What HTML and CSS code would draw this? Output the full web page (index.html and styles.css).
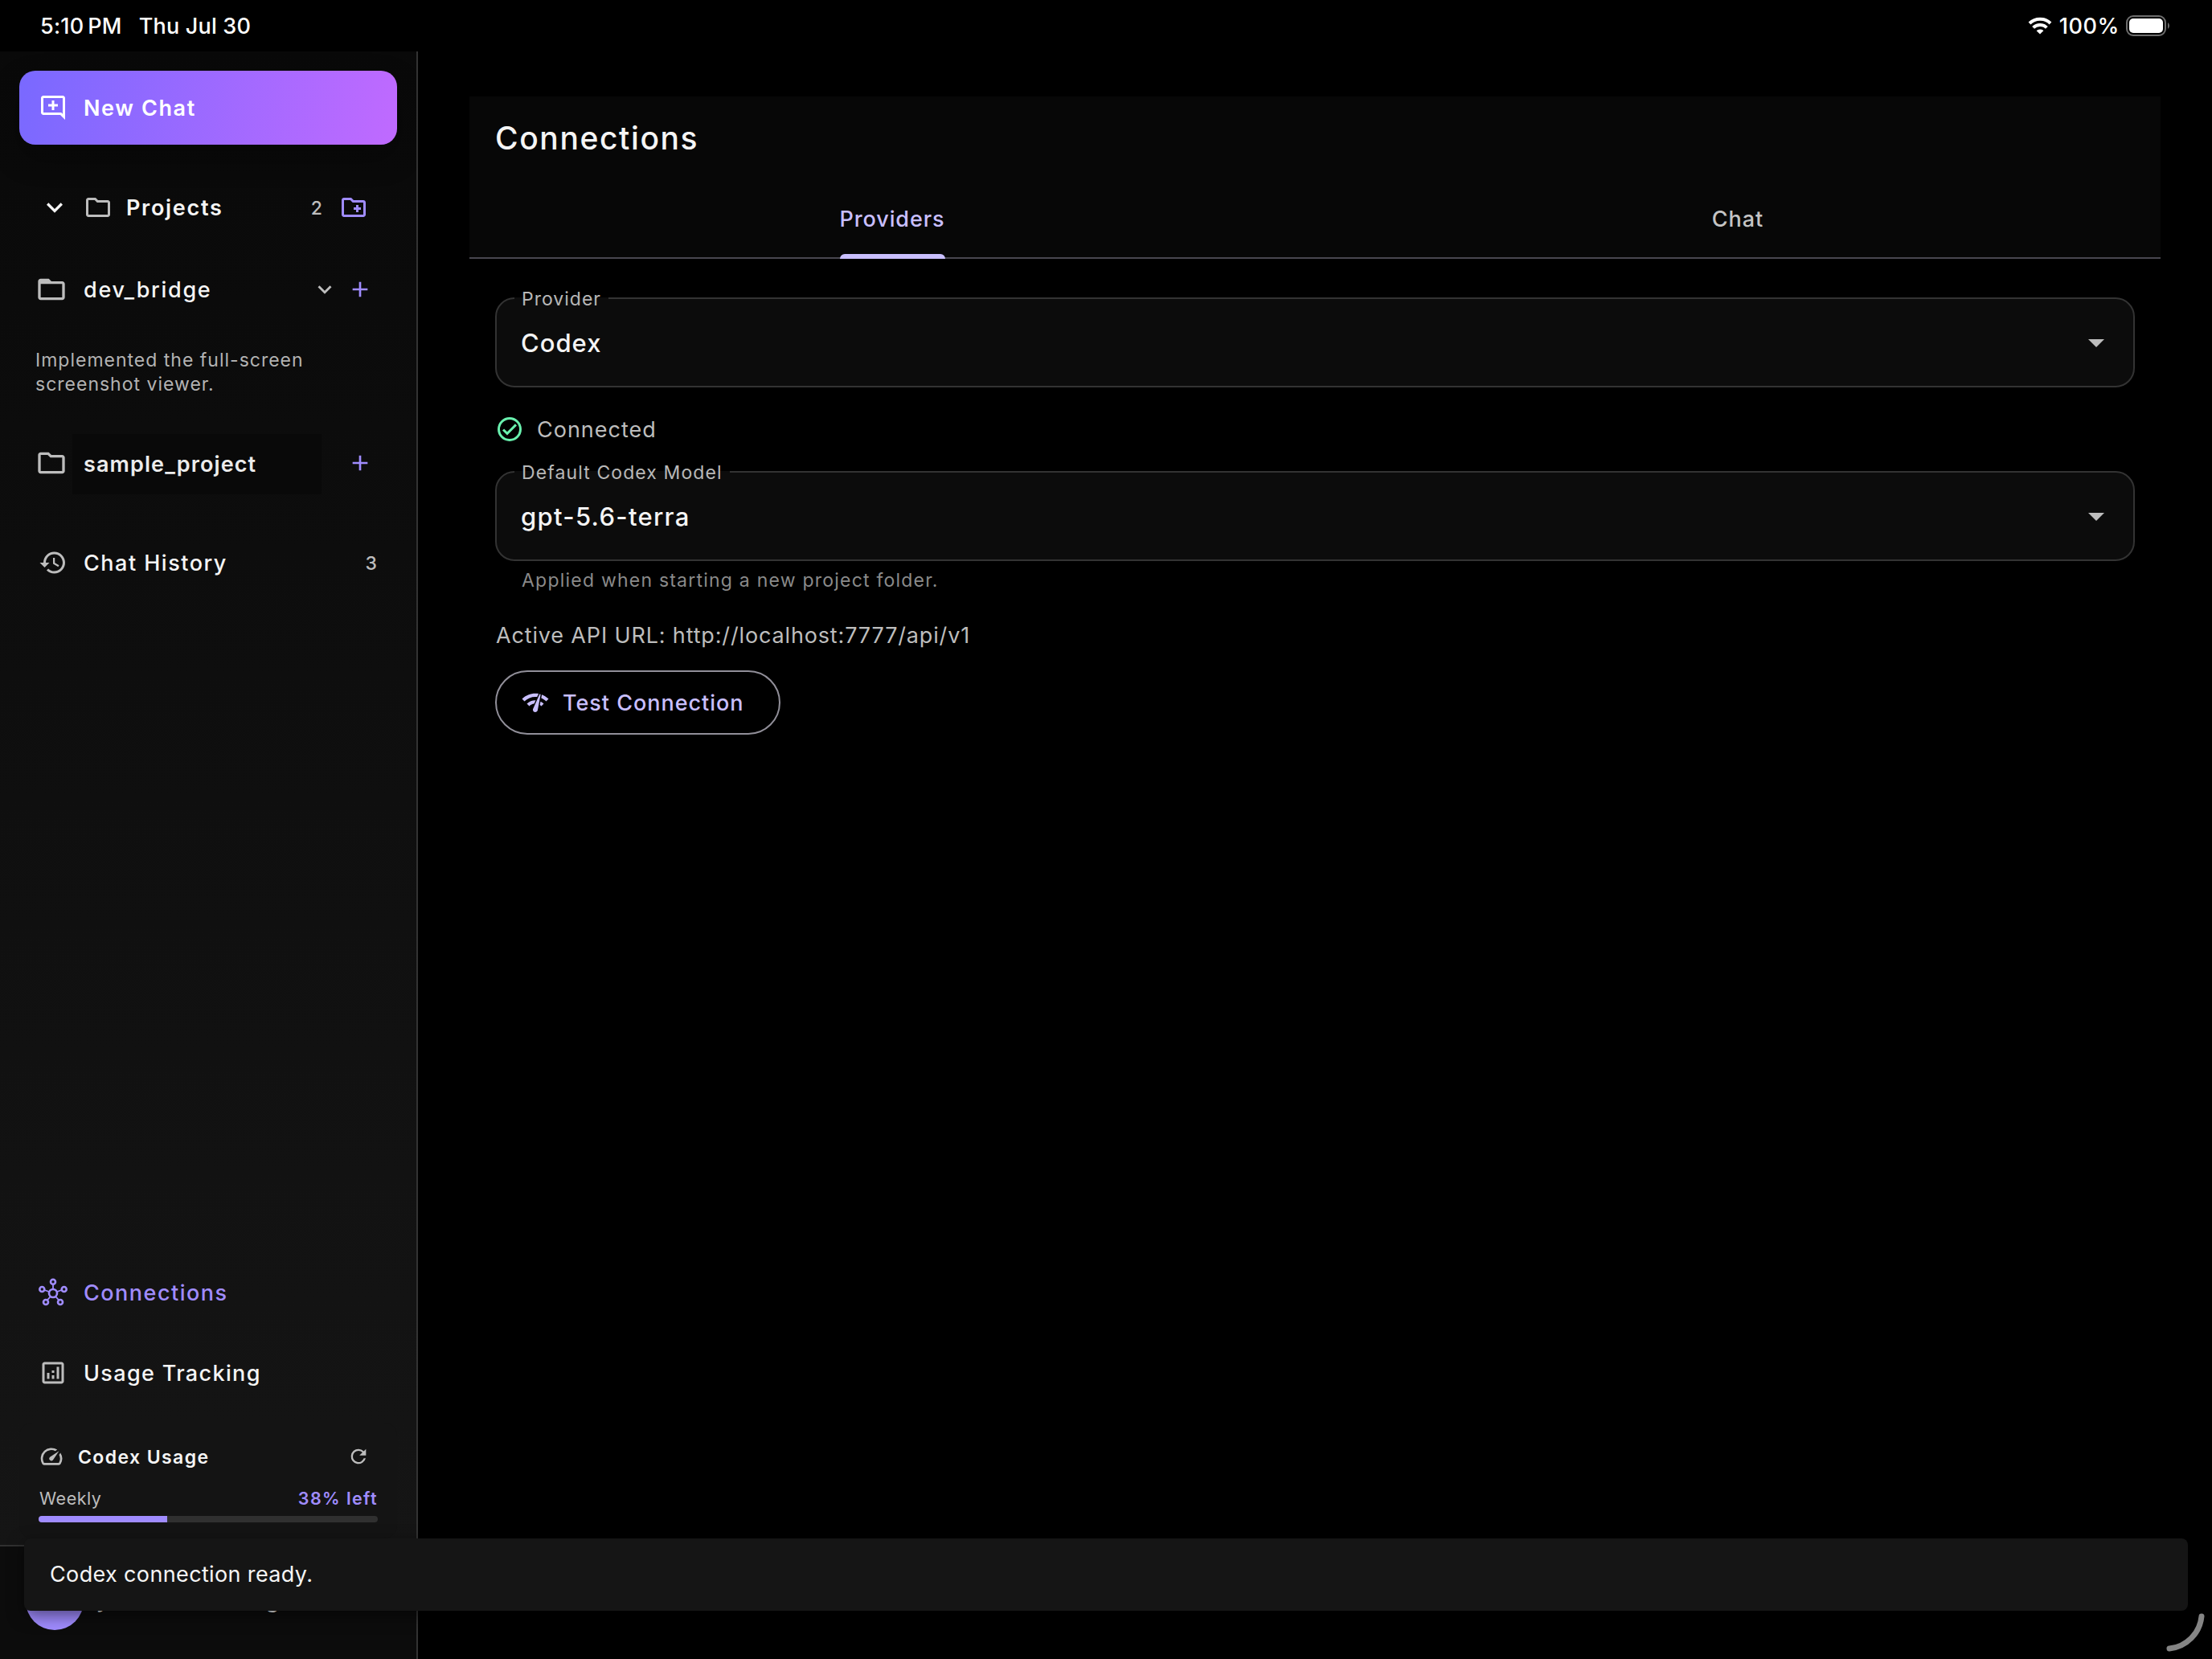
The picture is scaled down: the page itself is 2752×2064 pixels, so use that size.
FILE: index.html
```html
<!DOCTYPE html>
<html lang="en">
<head>
    <meta charset="utf-8">
    <meta name="viewport" content="width=device-width, initial-scale=1">
    <title>Connections</title>
    <link rel="stylesheet" href="styles.css">
</head>
<body>
    <header class="status-bar">
        <span class="time">5:10<span class="thin-space"></span>PM</span>
        <span class="date">Thu Jul 30</span>
        <svg class="wifi" viewBox="0 0 30 22">
            <path d="M15 21.6 L10.6 17.2 A6.3 6.3 0 0 1 19.4 17.2 Z" fill="#fff"/>
            <path d="M6.6 13.4 A11.8 11.8 0 0 1 23.4 13.4" fill="none" stroke="#fff" stroke-width="4"/>
            <path d="M2 8 A18.5 18.5 0 0 1 28 8" fill="none" stroke="#fff" stroke-width="4"/>
        </svg>
        <span class="percent">100%</span>
        <svg class="battery" viewBox="0 0 56 26">
            <rect x="1" y="1" width="48" height="24" rx="8" fill="none" stroke="#6e6e6e" stroke-width="2"/>
            <rect x="4" y="4" width="42" height="18" rx="5" fill="#fff"/>
            <path d="M52 9 A5 5 0 0 1 52 17 Z" fill="#6e6e6e"/>
        </svg>
    </header>

    <div class="app">
        <aside class="sidebar">
            <button class="new-chat">
                <svg class="icon-36" viewBox="0 0 24 24"><path d="M22 4c0-1.1-.9-2-2-2H4c-1.1 0-2 .9-2 2v12c0 1.1.9 2 2 2h14l4 4V4zM4 16V4h16v13.17L18.83 16H4zm9-10h-2v3H8v2h3v3h2v-3h3V9h-3z"/></svg>
                <span>New Chat</span>
            </button>

            <div class="row projects">
                <svg class="icon-40 bright" viewBox="0 0 24 24"><path d="M16.59 8.59 12 13.17 7.41 8.59 6 10l6 6 6-6z"/></svg>
                <svg class="icon-36" viewBox="0 0 24 24"><path d="m9.17 6 2 2H20v10H4V6h5.17M10 4H4c-1.1 0-1.99.9-1.99 2L2 18c0 1.1.9 2 2 2h16c1.1 0 2-.9 2-2V8c0-1.1-.9-2-2-2h-8l-2-2z"/></svg>
                <span class="label">Projects</span>
                <span class="count">2</span>
                <svg class="icon-36 accent" viewBox="0 0 24 24"><path d="M20 6h-8l-2-2H4c-1.11 0-1.99.89-1.99 2L2 18c0 1.11.89 2 2 2h16c1.11 0 2-.89 2-2V8c0-1.11-.89-2-2-2zm0 12H4V6h5.17l2 2H20v10zm-8-4h2v2h2v-2h2v-2h-2v-2h-2v2h-2z"/></svg>
            </div>

            <div class="row project">
                <svg class="icon-40" viewBox="0 0 24 24"><path d="M20 6h-8l-2-2H4c-1.1 0-1.99.9-1.99 2L2 18c0 1.1.9 2 2 2h16c1.1 0 2-.9 2-2V8c0-1.1-.9-2-2-2zm0 12H4V8h16v10z"/></svg>
                <span class="label">dev_bridge</span>
                <svg class="icon-34" viewBox="0 0 24 24"><path d="M16.59 8.59 12 13.17 7.41 8.59 6 10l6 6 6-6z"/></svg>
                <svg class="icon-32 accent" viewBox="0 0 24 24"><path d="M19 13h-6v6h-2v-6H5v-2h6V5h2v6h6z"/></svg>
            </div>
            <p class="summary">Implemented the full-screen<br>screenshot viewer.</p>

            <div class="row project sample">
                <svg class="icon-40" viewBox="0 0 24 24"><path d="m9.17 6 2 2H20v10H4V6h5.17M10 4H4c-1.1 0-1.99.9-1.99 2L2 18c0 1.1.9 2 2 2h16c1.1 0 2-.9 2-2V8c0-1.1-.9-2-2-2h-8l-2-2z"/></svg>
                <span class="label patch">sample_project</span>
                <svg class="icon-32 accent" viewBox="0 0 24 24"><path d="M19 13h-6v6h-2v-6H5v-2h6V5h2v6h6z"/></svg>
            </div>

            <div class="row history">
                <svg class="icon-36" viewBox="0 0 24 24"><path d="M13 3c-4.97 0-9 4.03-9 9H1l4 3.99L9 12H6c0-3.87 3.13-7 7-7s7 3.13 7 7-3.13 7-7 7c-1.93 0-3.68-.79-4.94-2.06l-1.42 1.42C8.27 19.99 10.51 21 13 21c4.97 0 9-4.03 9-9s-4.03-9-9-9zm-1 5v5l4.25 2.52.77-1.28-3.52-2.09V8z"/></svg>
                <span class="label">Chat History</span>
                <span class="count">3</span>
            </div>

            <div class="row connections">
                <svg class="icon-36" viewBox="0 0 36 36">
                    <g fill="none" stroke="#a08cff" stroke-width="2.6">
                        <circle cx="18" cy="19" r="5"/>
                        <circle cx="18" cy="4.7" r="3"/>
                        <circle cx="4.3" cy="14" r="3"/>
                        <circle cx="31.7" cy="14" r="3"/>
                        <circle cx="9" cy="30" r="3"/>
                        <circle cx="27" cy="30" r="3"/>
                        <path stroke-width="1.8" d="M18 8v6M7.4 15l5.6 2M28.6 15 23 17M11 27.4l3.8-4.4M25 27.4 21.2 23"/>
                    </g>
                </svg>
                <span class="label">Connections</span>
            </div>

            <div class="row tracking">
                <svg class="icon-36" viewBox="0 0 24 24"><path d="M19 3H5c-1.1 0-2 .9-2 2v14c0 1.1.9 2 2 2h14c1.1 0 2-.9 2-2V5c0-1.1-.9-2-2-2zm0 16H5V5h14v14zM7 12h2v5H7zM15 7h2v10h-2zM11 14h2v3h-2zM11 10h2v2h-2z"/></svg>
                <span class="label">Usage Tracking</span>
            </div>

            <div class="usage-card">
                <div class="usage-head">
                    <svg class="icon-32" viewBox="0 0 24 24"><path d="m20.38 8.57-1.23 1.85a8 8 0 0 1-.22 7.58H5.07A8 8 0 0 1 15.58 6.85l1.85-1.23A10 10 0 0 0 3.35 19a2 2 0 0 0 1.72 1h13.85a2 2 0 0 0 1.74-1 10 10 0 0 0-.27-10.44zm-9.79 6.84a2 2 0 0 0 2.83 0l5.66-8.49-8.49 5.66a2 2 0 0 0 0 2.83z"/></svg>
                    <span class="usage-title">Codex Usage</span>
                    <svg class="icon-28" viewBox="0 0 24 24"><path d="M17.65 6.35A7.96 7.96 0 0 0 12 4a8 8 0 1 0 7.73 10h-2.08A6 6 0 1 1 12 6c1.66 0 3.14.69 4.22 1.78L13 11h7V4z"/></svg>
                </div>
                <div class="usage-meta">
                    <span class="period">Weekly</span>
                    <span class="left">38% left</span>
                </div>
                <div class="bar"><div class="bar-fill" style="width: 38%"></div></div>
            </div>

            <div class="account">
                <div class="avatar"></div>
                <span class="account-name">your account log</span>
            </div>
        </aside>

        <main class="main">
            <div class="page-head">
                <h1>Connections</h1>
                <nav class="tabs">
                    <div class="tab active"><span>Providers</span></div>
                    <div class="tab"><span>Chat</span></div>
                </nav>
            </div>

            <div class="content">
                <div class="field">
                    <span class="field-label">Provider</span>
                    <span class="field-value">Codex</span>
                    <svg class="icon-48" viewBox="0 0 24 24"><path d="m7 10 5 5 5-5z"/></svg>
                </div>

                <div class="state">
                    <svg class="icon-36" viewBox="0 0 24 24"><path d="M16.59 7.58 10 14.17l-2.59-2.58L6 13l4 4 8-8zM12 2a10 10 0 1 0 0 20 10 10 0 0 0 0-20zm0 18a8 8 0 1 1 0-16 8 8 0 0 1 0 16z"/></svg>
                    <span>Connected</span>
                </div>

                <div class="field">
                    <span class="field-label model">Default Codex Model</span>
                    <span class="field-value model-value">gpt-5.6-terra</span>
                    <svg class="icon-48" viewBox="0 0 24 24"><path d="m7 10 5 5 5-5z"/></svg>
                </div>
                <p class="helper">Applied when starting a new project folder.</p>

                <p class="api-url">Active API URL: http://localhost:7777/api/v1</p>

                <button class="test-button">
                    <svg class="icon-36" viewBox="0 0 24 24"><path d="m15.9 5c-.17 0-.32.09-.41.23l-.07.15-5.18 11.65c-.16.29-.26.61-.26.96 0 1.11.9 2.01 2.01 2.01.96 0 1.77-.68 1.96-1.59l.01-.03L16.4 5.5c0-.28-.22-.5-.5-.5zM1 9l2 2c2.88-2.88 6.79-4.08 10.53-3.62l1.19-2.68C9.89 3.84 4.74 5.27 1 9zm20 2 2-2c-1.64-1.64-3.55-2.82-5.59-3.57l-.53 2.82c1.5.62 2.9 1.53 4.12 2.75zm-4 4 2-2c-.8-.8-1.7-1.42-2.66-1.89l-.55 2.92c.42.27.83.59 1.21.97zM5 13l2 2c1.13-1.13 2.56-1.79 4.03-2l1.28-2.88c-2.63-.08-5.3.87-7.31 2.88z"/></svg>
                    <span>Test Connection</span>
                </button>
            </div>
        </main>
    </div>

    <div class="snackbar">Codex connection ready.</div>
    <svg class="corner-handle" viewBox="0 0 48 48"><path d="M44 4C42 25 25 42 4 44" fill="none" stroke="#858585" stroke-width="7" stroke-linecap="round"/></svg>
</body>
</html>
```

FILE: styles.css
```css
* {
    box-sizing: border-box;
}

body {
    margin: 0;
    width: 2752px;
    height: 2064px;
    overflow: hidden;
    background-color: #000;
    color: #f5f5f5;
    font-family: Inter, "Liberation Sans", sans-serif;
    font-size: 27px;
    letter-spacing: 1px;
    position: relative;
    display: flex;
    flex-direction: column;
}

h1, p {
    margin: 0;
}

svg {
    display: block;
    flex-shrink: 0;
    fill: #bdbdbd;
}

button {
    font: inherit;
    letter-spacing: inherit;
    cursor: pointer;
}

.icon-28 { width: 28px; height: 28px; }
.icon-32 { width: 32px; height: 32px; }
.icon-34 { width: 34px; height: 34px; }
.icon-36 { width: 36px; height: 36px; }
.icon-40 { width: 40px; height: 40px; }
.icon-48 { width: 48px; height: 48px; }

.bright { fill: #f5f5f5; }
.accent { fill: #a08cff; }

/* status bar */
.status-bar {
    height: 64px;
    display: flex;
    align-items: center;
    padding: 0 51px 0 50px;
    color: #fff;
    font-weight: 500;
    letter-spacing: 0.2px;
}

.thin-space {
    display: inline-block;
    width: 5px;
}

.date {
    margin-left: 21px;
}

.wifi {
    width: 30px;
    height: 22px;
    margin-left: auto;
}

.percent {
    margin: 0 8px 0 9px;
    letter-spacing: 0.6px;
}

.battery {
    width: 56px;
    height: 26px;
}

.app {
    flex: 1;
    display: flex;
}

/* sidebar */
.sidebar {
    width: 520px;
    display: flex;
    flex-direction: column;
    border-right: 2px solid #333;
    background: linear-gradient(#090909, #151515 93%);
}

.new-chat {
    height: 92px;
    margin: 24px 24px 0;
    padding: 0 24px;
    display: flex;
    align-items: center;
    gap: 20px;
    border: none;
    border-radius: 20px;
    background: linear-gradient(101deg, #7969ff, #c06aff);
    box-shadow: 0 16px 36px rgba(0, 0, 0, 0.3);
    color: #fff;
    font-weight: 600;
    letter-spacing: 1.6px;
}

.new-chat svg {
    fill: #fff;
}

.row {
    display: flex;
    align-items: center;
    gap: 20px;
    padding: 0 48px;
    font-weight: 500;
    letter-spacing: 1.5px;
}

.label {
    flex: 1;
}

.count {
    margin-top: 1px;
    color: #bdbdbd;
    font-size: 23px;
    letter-spacing: 1px;
}

.projects {
    height: 96px;
    margin-top: 30px;
    padding-right: 60px;
    gap: 16px;
}

.projects .label {
    padding-left: 1px;
    font-weight: 600;
    letter-spacing: 1.7px;
}

.projects .count {
    margin-right: 4px;
}

.project {
    height: 96px;
    margin-top: 6px;
    padding: 0 54px 0 44px;
    letter-spacing: 1.7px;
}

.project .icon-34 {
    margin-right: -9px;
}

.summary {
    margin-top: 25px;
    padding-left: 44px;
    color: #b3b3b3;
    font-size: 23px;
    line-height: 30px;
}

.sample {
    margin-top: 35px;
}

.patch {
    height: 75px;
    line-height: 75px;
    margin: 3px 12px 0 -14px;
    padding-left: 14px;
    background-color: #090909;
    font-weight: 600;
    color: #ececec;
    letter-spacing: 1.1px;
}

.history {
    height: 96px;
    margin-top: 28px;
}

.connections {
    height: 96px;
    margin-top: auto;
    color: #a08cff;
}

.tracking {
    height: 96px;
    margin-top: 4px;
    letter-spacing: 1.35px;
}

.usage-card {
    height: 144px;
    margin: 14px 24px 8px;
    padding: 18px 24px 0;
    border-radius: 16px;
    background-color: #141414;
}

.usage-head {
    height: 48px;
    display: flex;
    align-items: center;
    gap: 17px;
    padding-right: 10px;
    font-size: 23px;
    letter-spacing: 1.4px;
}

.usage-title {
    flex: 1;
    padding-top: 2px;
    font-weight: 600;
}

.usage-meta {
    height: 34px;
    margin-top: 11px;
    display: flex;
    align-items: center;
    justify-content: space-between;
    color: #bdbdbd;
    font-size: 21.5px;
}

.period {
    padding-left: 1px;
    letter-spacing: 0.5px;
}

.left {
    color: #a08cff;
    font-weight: 600;
    letter-spacing: 1.4px;
}

.bar {
    height: 8px;
    margin-top: 5px;
    border-radius: 4px;
    background-color: #303030;
    overflow: hidden;
}

.bar-fill {
    height: 100%;
    background-color: #a08cff;
}

.account {
    height: 142px;
    padding: 0 0 4px 32px;
    display: flex;
    align-items: center;
    gap: 16px;
    border-top: 2px solid #303030;
    background-color: #0c0c0c;
}

.avatar {
    width: 72px;
    height: 72px;
    border-radius: 50%;
    background-color: #a08cff;
}

.account-name {
    margin-bottom: 4px;
    font-weight: 500;
    letter-spacing: 0.7px;
}

/* main panel */
.main {
    flex: 1;
    padding: 56px 64px 0;
}

.page-head {
    height: 202px;
    border-bottom: 2px solid #48464f;
    background-color: #070707;
}

h1 {
    height: 104px;
    padding-left: 32px;
    line-height: 104px;
    font-size: 39px;
    font-weight: 500;
    letter-spacing: 1.6px;
}

.tabs {
    height: 98px;
    display: flex;
}

.tab {
    flex: 1;
    display: flex;
    justify-content: center;
    color: #c4c4c4;
    font-weight: 450;
}

.tab span {
    height: 98px;
    line-height: 97px;
}

.active span {
    color: #c9bfff;
    letter-spacing: 0.9px;
}

.active span::after {
    content: "";
    display: block;
    height: 6px;
    margin-top: -5px;
    border-radius: 6px 6px 0 0;
    background-color: #c9bfff;
}

.content {
    padding: 48px 32px 0;
}

.field {
    position: relative;
    height: 112px;
    display: flex;
    align-items: center;
    justify-content: space-between;
    padding: 0 22px 0 30px;
    border: 2px solid #333;
    border-radius: 24px;
    background-color: #0c0c0c;
}

.field-label {
    position: absolute;
    left: 22px;
    top: -16px;
    padding: 0 9px;
    background: linear-gradient(#000 14px, #0c0c0c 14px);
    color: #b8b8b8;
    font-size: 23px;
    line-height: 32px;
}

.model {
    letter-spacing: 1.1px;
}

.field-value {
    font-size: 31px;
    font-weight: 450;
}

.model-value {
    letter-spacing: 1.3px;
}

.state {
    height: 104px;
    display: flex;
    align-items: center;
    gap: 16px;
    color: #bdbdbd;
}

.state svg {
    fill: #69f0ae;
}

.helper {
    margin-top: 8px;
    padding-left: 33px;
    color: #8a8a8a;
    font-size: 23px;
    line-height: 32px;
    letter-spacing: 1.22px;
}

.api-url {
    margin-top: 33px;
    padding-left: 1px;
    color: #bdbdbd;
    line-height: 40px;
    letter-spacing: 0.85px;
}

.test-button {
    width: 355px;
    height: 80px;
    margin-top: 23px;
    padding: 0 0 0 30px;
    display: flex;
    align-items: center;
    gap: 16px;
    border: 2px solid #918f99;
    border-radius: 40px;
    background-color: transparent;
    color: #c9bfff;
    font-weight: 450;
    letter-spacing: 0.98px;
}

.test-button svg {
    fill: #c9bfff;
}

/* overlays */
.snackbar {
    position: absolute;
    left: 30px;
    right: 30px;
    bottom: 60px;
    height: 90px;
    padding-left: 32px;
    line-height: 90px;
    border-radius: 8px;
    background-color: #151515;
    box-shadow: 0 6px 20px rgba(0, 0, 0, 0.5);
    letter-spacing: 0.36px;
}

.corner-handle {
    position: absolute;
    right: 9px;
    bottom: 9px;
    width: 48px;
    height: 48px;
}
```
